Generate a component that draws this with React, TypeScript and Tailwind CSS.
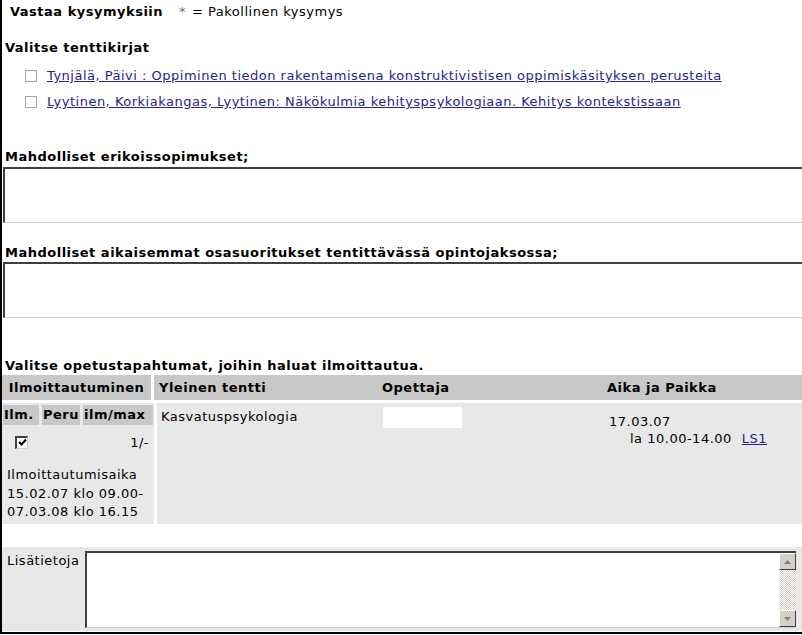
import React from 'react'

const books = [
  'Tynjälä, Päivi : Oppiminen tiedon rakentamisena konstruktivistisen oppimiskäsityksen perusteita',
  'Lyytinen, Korkiakangas, Lyytinen: Näkökulmia kehityspsykologiaan. Kehitys kontekstissaan',
]

function Box() {
  return <span className="inline-block w-[12px] h-[12px] border border-[#a8a8a8] bg-white shrink-0" />
}

function CheckedBox() {
  return (
    <span className="inline-flex w-[13px] h-[13px] border-t-2 border-l-2 border-[#404040] border-b border-r border-b-[#d4d0c8] border-r-[#d4d0c8] bg-white items-center justify-center">
      <svg width="9" height="9" viewBox="0 0 9 9">
        <path d="M1 4 L3.5 6.5 L8 1.5" stroke="#000" strokeWidth="2" fill="none" />
      </svg>
    </span>
  )
}

function Field() {
  return <div className="h-[56px] ml-[1px] bg-white border-t-2 border-l-2 border-t-[#404040] border-l-[#404040] border-b border-b-[#d0d0d0]" />
}

export default function App() {
  return (
    <div className="w-[802px] h-[634px] overflow-hidden bg-white border-l-2 border-b-2 border-black font-['DejaVu_Sans',sans-serif] text-[13px] tracking-[0.5px] leading-[16px] text-black">
      <div className="mt-[4px] ml-[8px] flex">
        <span className="font-bold">Vastaa kysymyksiin</span>
        <span className="ml-[16px] text-[#777]">*</span>
        <span className="ml-[6px]">= Pakollinen kysymys</span>
      </div>

      <div className="mt-[20px] ml-[3px] font-bold">Valitse tenttikirjat</div>
      <div className="mt-[7px]">
        {books.map((b) => (
          <div key={b} className="h-[26px] flex items-center pl-[23px] gap-[10px]">
            <Box />
            <a href="#" className="text-[#24248f] underline">{b}</a>
          </div>
        ))}
      </div>

      <div className="mt-[34px] ml-[3px] font-bold">Mahdolliset erikoissopimukset;</div>
      <div className="mt-[2px]"><Field /></div>

      <div className="mt-[22px] ml-[3px] font-bold">Mahdolliset aikaisemmat osasuoritukset tentittävässä opintojaksossa;</div>
      <div className="mt-[1px]"><Field /></div>

      <div className="mt-[40px] ml-[3px] font-bold">Valitse opetustapahtumat, joihin haluat ilmoittautua.</div>

      <div className="mt-[1px]">
        <div className="grid grid-cols-[152px_222px_222px_1fr] gap-x-[3px] h-[25px] bg-[#c8c8c8] font-bold items-center">
          <div className="text-center border-r-[3px] border-white h-full flex items-center justify-center">Ilmoittautuminen</div>
          <div className="pl-[2px]">Yleinen tentti</div>
          <div>Opettaja</div>
          <div>Aika ja Paikka</div>
        </div>
        <div className="mt-[3px] flex h-[121px]">
          <div className="w-[152px] bg-[#e8e8e8] pt-[2px] px-[1px]">
            <div className="flex gap-[3px] font-bold">
              <div className="w-[36px] bg-[#c8c8c8] h-[20px] flex items-center pl-[1px]">Ilm.</div>
              <div className="w-[38px] bg-[#c8c8c8] h-[20px] flex items-center pl-[1px]">Peru</div>
              <div className="flex-1 bg-[#c8c8c8] h-[20px] flex items-center pl-[1px]">ilm/max</div>
            </div>
            <div className="flex items-center h-[26px] mt-[5px]">
              <span className="ml-[12px]"><CheckedBox /></span>
              <span className="ml-auto mr-[4px]">1/-</span>
            </div>
            <div className="mt-[9px] pl-[4px] leading-[20px]">
              <div>Ilmoittautumisaika</div>
              <div className="leading-[18px]">15.02.07 klo 09.00-</div>
              <div className="leading-[18px]">07.03.08 klo 16.15</div>
            </div>
          </div>
          <div className="ml-[3px] flex-1 bg-[#e8e8e8] grid grid-cols-[222px_222px_1fr] pt-[6px]">
            <div className="pl-[4px]">Kasvatuspsykologia</div>
            <div className="pl-[4px]">
              <div className="w-[79px] h-[21px] bg-white -mt-[2px]" />
            </div>
            <div className="pl-[8px] pt-[5px]">
              <div>17.03.07</div>
              <div className="pl-[21px] mt-[1px]">
                la 10.00-14.00
                <a href="#" className="ml-[10px] text-[#24248f] underline">LS1</a>
              </div>
            </div>
          </div>
        </div>
      </div>

      <div className="mt-[23px] h-[84px] bg-[#e8e8e8] flex">
        <div className="w-[83px] pl-[5px] pt-[6px]">Lisätietoja</div>
        <div className="mt-[4px] w-[711px] h-[77px] flex bg-white border-t-2 border-l-2 border-t-[#404040] border-l-[#404040] border-b border-b-[#d4d0c8]">
          <div className="flex-1" />
          <div className="w-[17px] flex flex-col bg-[repeating-conic-gradient(#d4d0c8_0%_25%,#ffffff_0%_50%)] bg-[length:2px_2px]">
            <div className="h-[17px] bg-[#d4d0c8] border border-t-white border-l-white border-b-[#404040] border-r-[#404040] flex items-center justify-center">
              <svg width="7" height="4" viewBox="0 0 7 4"><path d="M0 4 L3.5 0 L7 4 Z" fill="#808080" /></svg>
            </div>
            <div className="flex-1" />
            <div className="h-[17px] bg-[#d4d0c8] border border-t-white border-l-white border-b-[#404040] border-r-[#404040] flex items-center justify-center">
              <svg width="7" height="4" viewBox="0 0 7 4"><path d="M0 0 L3.5 4 L7 0 Z" fill="#808080" /></svg>
            </div>
          </div>
        </div>
      </div>
    </div>
  )
}
